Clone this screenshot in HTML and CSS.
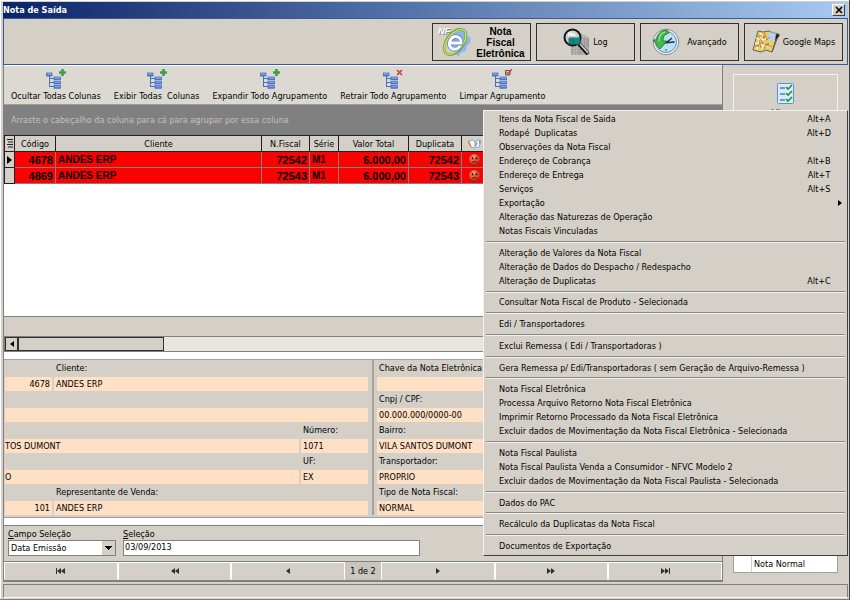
FILE: index.html
```html
<!DOCTYPE html>
<html lang="pt-BR">
<head>
  <meta charset="UTF-8">
  <meta name="viewport" content="width=device-width, initial-scale=1.0">
  <title>Nota de Saída</title>
  <link rel="stylesheet" href="styles.css">
</head>
<body>

  <!-- shared icon shapes -->
  <svg class="defs" aria-hidden="true">
    <defs>
      <linearGradient id="node" x1="0" y1="0" x2="0" y2="1">
        <stop offset="0" stop-color="#a9c6f7"/>
        <stop offset="1" stop-color="#3f6fd6"/>
      </linearGradient>
      <radialGradient id="face" cx=".4" cy=".3" r=".7">
        <stop offset="0" stop-color="#ff9a70"/>
        <stop offset="1" stop-color="#c81e08"/>
      </radialGradient>
      <symbol id="tree" viewBox="0 0 20 20">
        <path d="M3.500 6v12M3.500 9.500h5M3.500 13.500h5M3.500 17.500h5" fill="none" stroke="#4c6fb5"/>
        <g fill="url(#node)" stroke="#3560b8" stroke-width=".7">
          <rect x=".5" y="4" width="5.500" height="3"/>
          <rect x="8" y="8" width="6.500" height="2.800"/>
          <rect x="8" y="12.200" width="6.500" height="2.800"/>
          <rect x="8" y="16.400" width="6.500" height="2.800"/>
        </g>
      </symbol>
      <symbol id="sad" viewBox="0 0 14 14">
        <circle cx="7" cy="7" r="6.300" fill="url(#face)" stroke="#a51200" stroke-width=".6"/>
        <path d="M3.500 4l2 1M10.500 4l-2 1" stroke="#5a0c00" stroke-width=".8"/>
        <circle cx="5" cy="6" r="1" fill="#400"/>
        <circle cx="9" cy="6" r="1" fill="#400"/>
        <path d="M4 11q3-4 6 0" fill="none" stroke="#400"/>
      </symbol>
    </defs>
  </svg>

  <div class="window">
    <header class="title-bar">
      <h1>Nota de Saída</h1>
      <button type="button" class="close" aria-label="Fechar">
        <svg viewBox="0 0 8 8" width="8" height="8"><path d="M1 1l6 6M7 1L1 7" stroke="#000" stroke-width="1.600"/></svg>
      </button>
    </header>

    <div class="actions">
      <button type="button" class="action bold">
        <svg viewBox="0 0 34 32" width="34" height="32">
          <path d="M14 6l5-3 3 2 5-2 3 3-1 3 4 3-1 5-3 3-1 5-5 2-3 4-3-4-5-2-1-4 3-3z" fill="#8db5ea" stroke="#b4cdf2"/>
          <ellipse cx="17" cy="16" rx="8.500" ry="14.500" transform="rotate(36 17 16)" fill="none" stroke="#5faa3c" stroke-width="2.600"/>
          <ellipse cx="17" cy="16" rx="8" ry="14.500" transform="rotate(38 17 16)" fill="none" stroke="#dfe04a" stroke-width="1.200"/>
          <path d="M12 17h11c1-7-8-9-11-2-3 8 6 11 10 5" fill="none" stroke="#5d83c4" stroke-width="4.600"/>
          <path d="M12 17h11c1-7-8-9-11-2-3 8 6 11 10 5" fill="none" stroke="#fff" stroke-width="3"/>
          <text x="1" y="9" class="nf shade" aria-hidden="true">NF</text>
          <text x="0" y="8" class="nf">NF</text>
        </svg>
        <span>Nota<br>Fiscal<br>Eletrônica</span>
      </button>
      <button type="button" class="action">
        <svg viewBox="0 0 27 28" width="27" height="28">
          <path d="M8 5h9l9 5v17H8z" fill="#9b9b9b"/>
          <path d="M8 7h18M8 9h18M8 20h18M8 23h18M8 26h18M11 5v22M14 5v22M20 7v20M23 8v19" stroke="#c9c9c9" stroke-width=".6"/>
          <circle cx="9.500" cy="9.500" r="8" fill="#c6d2d2" fill-opacity=".8" stroke="#111" stroke-width="2"/>
          <path d="M5 4l6 1 3 3H5z" fill="#eee"/>
          <path d="M6 10h11v6H6zM6 12h11M6 14h11M10 10v6" fill="#19a49c" stroke="#075e5a" stroke-width=".7"/>
          <path d="M16 16l9 10" stroke="#111" stroke-width="4"/>
          <path d="M17 16l8 9" stroke="#dcdcdc" stroke-width="1.500"/>
        </svg>
        <span>Log</span>
      </button>
      <button type="button" class="action wide">
        <svg viewBox="0 0 28 28" width="28" height="28">
          <circle cx="14" cy="14" r="12.800" fill="#ececf0" stroke="#8d8d98" stroke-width="1"/>
          <circle cx="14" cy="14" r="10.500" fill="#b9e3f7" stroke="#5f8fb8" stroke-width="1"/>
          <path d="M14 5v2M14 21v2M5 14h2M21 14h2" stroke="#456"/>
          <path d="M14 15l6-5M12 15l10-1" stroke="#234" stroke-width="1.400"/>
          <path d="M15 2C8 2 5 7 5 12H1l7 9 7-8h-4c0-5 2-7 6-8z" fill="#45b84a" stroke="#16722a" stroke-width=".8"/>
          <path d="M13 4c-4 1-6 5-6 9" fill="none" stroke="#a8eba0" stroke-width="1.200"/>
        </svg>
        <span>Avançado</span>
      </button>
      <button type="button" class="action">
        <svg viewBox="0 0 28 24" width="28" height="24">
          <path d="M6 1l5 1 6-1 4 2 6 1-7 18-6-2-5 2-8-2z" fill="#f0ca62" stroke="#55585f" stroke-width=".9"/>
          <path d="M17 2l4 1 4 1-4 8-6-2z" fill="#b9d3e8"/>
          <path d="M4 8l8 2M3 13l16 4M9 3L5 19M14 8l-4 11" fill="none" stroke="#fff" stroke-width="1.200"/>
          <path d="M5 5l6 8 7-6M2 17l7-4 11 4M12 2l3 8M7 10l2 8M14 14l-2 5" fill="none" stroke="#a87428" stroke-width=".8"/>
          <path d="M7 6h2M11 7h2M5 16h2M15 14h2" stroke="#555" stroke-width="1.200"/>
          <path d="M24 4l4 1-5 6z" fill="#222"/>
          <path d="M24 9l-4 13" stroke="#555"/>
        </svg>
        <span>Google Maps</span>
      </button>
    </div>

    <div class="content">
      <main class="main">
        <div class="toolbar">
          <button type="button">
            <svg viewBox="0 0 20 20" width="20" height="20"><use href="#tree"/><path d="M16.500 0v7M13 3.500h7" stroke="#3f9c4f" stroke-width="2.600"/></svg>
            Ocultar Todas Colunas
          </button>
          <button type="button">
            <svg viewBox="0 0 20 20" width="20" height="20"><use href="#tree"/><path d="M16.500 0v7M13 3.500h7" stroke="#3f9c4f" stroke-width="2.600"/></svg>
            Exibir Todas&nbsp; Colunas
          </button>
          <button type="button">
            <svg viewBox="0 0 20 20" width="20" height="20"><use href="#tree"/><path d="M16.500 0v7M13 3.500h7" stroke="#3f9c4f" stroke-width="2.600"/></svg>
            Expandir Todo Agrupamento
          </button>
          <button type="button">
            <svg viewBox="0 0 20 20" width="20" height="20"><use href="#tree"/><path d="M14 1l5 5M19 1l-5 5" stroke="#d23a3a" stroke-width="1.600"/></svg>
            Retrair Todo Agrupamento
          </button>
          <button type="button">
            <svg viewBox="0 0 20 20" width="20" height="20"><use href="#tree"/><path d="M13.500 1.500h4.500v4.500h-4.500z" fill="#ccc" stroke="#555"/><path d="M14.500 3l1.500 2 4-5" fill="none" stroke="#d9362f" stroke-width="1.200"/></svg>
            Limpar Agrupamento
          </button>
        </div>

        <div class="group-area">Arraste o cabeçalho da coluna para cá para agrupar por essa coluna</div>

        <div class="grid-area">
          <table class="grid">
            <colgroup>
              <col class="c-mark"><col class="c-code"><col class="c-client"><col class="c-invoice"><col class="c-serie"><col class="c-total"><col class="c-dup"><col class="c-status"><col>
            </colgroup>
            <thead>
              <tr>
                <th><svg viewBox="0 0 6 9" width="6" height="9"><path d="M0 .5h6M1 3h5M0 5.500h6M1 8h5" stroke="#222"/></svg></th>
                <th>Código</th>
                <th>Cliente</th>
                <th>N.Fiscal</th>
                <th>Série</th>
                <th>Valor Total</th>
                <th>Duplicata</th>
                <th><svg viewBox="0 0 14 10" width="14" height="10"><path d="M1 2l4-1 2 2 3-2 3 1-2 6-4 1-4-1z" fill="#fff" stroke="#6a9ad0" stroke-width=".8"/><path d="M0 2l2 4 1 2" stroke="#f08030" stroke-width="1.500" fill="none"/><path d="M7 3v5M9 3l-1 4" stroke="#4a90d8"/><path d="M11 2h2l-2 4" fill="#ef7a38"/></svg></th>
                <th></th>
              </tr>
            </thead>
            <tbody>
              <tr class="current">
                <td><svg viewBox="0 0 5 8" width="5" height="8"><path d="M0 0l5 4-5 4z"/></svg></td>
                <td class="num">4678</td>
                <td>ANDES ERP</td>
                <td class="num">72542</td>
                <td>M1</td>
                <td class="num">6.000,00</td>
                <td class="num">72542</td>
                <td><svg width="13" height="13"><use href="#sad"/></svg></td>
                <td></td>
              </tr>
              <tr>
                <td></td>
                <td class="num">4869</td>
                <td>ANDES ERP</td>
                <td class="num">72543</td>
                <td>M1</td>
                <td class="num">6.000,00</td>
                <td class="num">72543</td>
                <td><svg width="13" height="13"><use href="#sad"/></svg></td>
                <td></td>
              </tr>
            </tbody>
          </table>
        </div>
        <div class="grid-footer"></div>
        <div class="scrollbar">
          <button type="button" aria-label="Rolar para a esquerda"><svg viewBox="0 0 4 6" width="4" height="6"><path d="M4 0v6L0 3z"/></svg></button>
          <div class="thumb"></div>
        </div>

        <div class="details">
          <div class="column">
            <div class="fields">
              <input class="code" aria-label="Código do cliente" value="4678" readonly>
              <div class="field"><label for="cliente">Cliente:</label><input id="cliente" value="ANDES ERP" readonly></div>
            </div>
            <div class="fields">
              <input aria-label="Complemento" value="" readonly>
            </div>
            <div class="fields">
              <input class="cut" aria-label="Endereço" value="TOS DUMONT" readonly>
              <div class="field small"><label for="numero">Número:</label><input id="numero" value="1071" readonly></div>
            </div>
            <div class="fields">
              <input class="cut" aria-label="Cidade" value="O" readonly>
              <div class="field small"><label for="uf">UF:</label><input id="uf" value="EX" readonly></div>
            </div>
            <div class="fields">
              <input class="code" aria-label="Código do representante" value="101" readonly>
              <div class="field"><label for="repr">Representante de Venda:</label><input id="repr" value="ANDES ERP" readonly></div>
            </div>
          </div>
          <div class="column right">
            <div class="fields"><div class="field"><label for="chave">Chave da Nota Eletrônica:</label><input id="chave" value="" readonly></div></div>
            <div class="fields"><div class="field"><label for="cnpj">Cnpj / CPF:</label><input id="cnpj" value="00.000.000/0000-00" readonly></div></div>
            <div class="fields"><div class="field"><label for="bairro">Bairro:</label><input id="bairro" value="VILA SANTOS DUMONT" readonly></div></div>
            <div class="fields"><div class="field"><label for="transp">Transportador:</label><input id="transp" value="PROPRIO" readonly></div></div>
            <div class="fields"><div class="field"><label for="tipo">Tipo de Nota Fiscal:</label><input id="tipo" value="NORMAL" readonly></div></div>
          </div>
        </div>

        <form class="filter">
          <div class="filter-field">
            <label for="campo"><u>C</u>ampo Seleção</label>
            <select id="campo"><option>Data Emissão</option></select>
          </div>
          <div class="filter-field text">
            <label for="selecao"><u>S</u>eleção</label>
            <input type="text" id="selecao" value="03/09/2013">
          </div>
        </form>

        <nav class="pager">
          <button type="button" aria-label="Primeiro"><svg viewBox="0 0 9 6" width="9" height="6"><path d="M0 0h1v6H0zM5 0v6L1 3zM9 0v6L5 3z"/></svg></button>
          <button type="button" aria-label="Página anterior"><svg viewBox="0 0 8 6" width="8" height="6"><path d="M4 0v6L0 3zM8 0v6L4 3z"/></svg></button>
          <button type="button" aria-label="Anterior"><svg viewBox="0 0 4 6" width="4" height="6"><path d="M4 0v6L0 3z"/></svg></button>
          <span>1 de 2</span>
          <button type="button" aria-label="Próximo"><svg viewBox="0 0 4 6" width="4" height="6"><path d="M0 0v6l4-3z"/></svg></button>
          <button type="button" aria-label="Próxima página"><svg viewBox="0 0 8 6" width="8" height="6"><path d="M0 0v6l4-3zM4 0v6l4-3z"/></svg></button>
          <button type="button" aria-label="Último"><svg viewBox="0 0 9 6" width="9" height="6"><path d="M0 0v6l4-3zM4 0v6l4-3zM8 0h1v6H8z"/></svg></button>
        </nav>
      </main>

      <aside class="side">
        <div class="side-box">
          <button type="button">
            <svg viewBox="0 0 17 21" width="17" height="21">
              <rect x=".5" y=".5" width="16" height="20" rx="1" fill="#d8eafb" stroke="#5b93d2"/>
              <path d="M3 5h5M3 11h5M3 17h5" stroke="#4a7fc0" stroke-width="1.300"/>
              <path d="M9 4l2 2 4-4M9 10l2 2 4-4M9 16l2 2 4-4" fill="none" stroke="#1f9436" stroke-width="1.600"/>
            </svg>
            Liberar
          </button>
        </div>
        <div class="legend"><span></span>Nota Normal</div>
      </aside>
    </div>

    <footer class="status"></footer>

    <div class="menu" role="menu">
      <button type="button" role="menuitem">Itens da Nota Fiscal de Saida <kbd>Alt+A</kbd></button>
      <button type="button" role="menuitem">Rodapé&nbsp; Duplicatas <kbd>Alt+D</kbd></button>
      <button type="button" role="menuitem">Observações da Nota Fiscal</button>
      <button type="button" role="menuitem">Endereço de Cobrança <kbd>Alt+B</kbd></button>
      <button type="button" role="menuitem">Endereço de Entrega <kbd>Alt+T</kbd></button>
      <button type="button" role="menuitem">Serviços <kbd>Alt+S</kbd></button>
      <button type="button" role="menuitem" class="submenu">Exportação <svg viewBox="0 0 4 6" width="4" height="6"><path d="M0 0l4 3-4 3z"/></svg></button>
      <button type="button" role="menuitem">Alteração das Naturezas de Operação</button>
      <button type="button" role="menuitem">Notas Fiscais Vinculadas</button>
      <div class="separator"></div>
      <button type="button" role="menuitem">Alteração de Valores da Nota Fiscal</button>
      <button type="button" role="menuitem">Alteração de Dados do Despacho / Redespacho</button>
      <button type="button" role="menuitem">Alteração de Duplicatas <kbd>Alt+C</kbd></button>
      <div class="separator"></div>
      <button type="button" role="menuitem">Consultar Nota Fiscal de Produto - Selecionada</button>
      <div class="separator"></div>
      <button type="button" role="menuitem">Edi / Transportadores</button>
      <div class="separator"></div>
      <button type="button" role="menuitem">Exclui Remessa ( Edi / Transportadoras )</button>
      <div class="separator"></div>
      <button type="button" role="menuitem">Gera Remessa p/ Edi/Transportadoras ( sem Geração de Arquivo-Remessa )</button>
      <div class="separator"></div>
      <button type="button" role="menuitem">Nota Fiscal Eletrônica</button>
      <button type="button" role="menuitem">Processa Arquivo Retorno Nota Fiscal Eletrônica</button>
      <button type="button" role="menuitem">Imprimir Retorno Processado da Nota Fiscal Eletrônica</button>
      <button type="button" role="menuitem">Excluir dados de Movimentação da Nota Fiscal Eletrônica - Selecionada</button>
      <div class="separator"></div>
      <button type="button" role="menuitem">Nota Fiscal Paulista</button>
      <button type="button" role="menuitem">Nota Fiscal Paulista Venda a Consumidor - NFVC Modelo 2</button>
      <button type="button" role="menuitem">Excluir dados de Movimentação da Nota Fiscal Paulista - Selecionada</button>
      <div class="separator"></div>
      <button type="button" role="menuitem">Dados do PAC</button>
      <div class="separator"></div>
      <button type="button" role="menuitem">Recálculo da Duplicatas da Nota Fiscal</button>
      <div class="separator"></div>
      <button type="button" role="menuitem">Documentos de Exportação</button>
    </div>
  </div>

</body>
</html>
```

FILE: styles.css
```css
* {
  box-sizing: border-box;
}
body {
  margin: 0;
  font-family: "DejaVu Sans Condensed", "DejaVu Sans", sans-serif;
  font-size: 9px;
  line-height: 12px;
  color: #000;
  background: #d4d0c8;
}
button, input, select {
  font: inherit;
  color: inherit;
  margin: 0;
  padding: 0;
  border: 0;
  border-radius: 0;
  background: none;
}
button {
  display: flex;
  align-items: center;
  justify-content: center;
}
svg {
  flex: none;
  display: block;
}
.defs {
  position: absolute;
  width: 0;
  height: 0;
}
.window {
  position: relative;
  display: flex;
  flex-direction: column;
  min-height: 100vh;
  padding: 2px 1px 1px 3px;
  border-right: 1px solid #404040;
  border-bottom: 1px solid #808080;
  background: #d4d0c8;
  box-shadow: inset 1px 1px #fff;
}

/* title bar */
.title-bar {
  display: flex;
  align-items: center;
  justify-content: space-between;
  height: 16px;
  padding-right: 3px;
  background: linear-gradient(to right, #0a246a, #a6caf0);
}
.title-bar h1 {
  margin: 0;
  font-size: 9px;
  font-weight: bold;
  color: #fff;
}
.close {
  width: 13px;
  height: 12px;
  background: #d4d0c8;
  border: 1px solid;
  border-color: #fff #404040 #404040 #fff;
}

/* header buttons */
.actions {
  display: flex;
  justify-content: flex-end;
  gap: 5px;
  padding: 4px 4px 3px;
  border: 1px solid #3b5998;
}
.action {
  width: 99px;
  height: 38px;
  gap: 3px;
  border: 1px solid #303030;
}
.action.bold {
  gap: 4px;
  font-family: "Liberation Sans", Arial, sans-serif;
  font-size: 10px;
  font-weight: bold;
  line-height: 11px;
}
.action.wide {
  gap: 7px;
}
.nf {
  font: italic bold 9px "Liberation Sans", sans-serif;
  fill: #fff;
}
.nf.shade {
  fill: #8a8a8a;
}

.content {
  flex: 1;
  display: flex;
}
.main {
  flex: 1;
  display: flex;
  flex-direction: column;
  min-width: 0;
  border-left: 1px solid #808080;
  border-right: 1px solid #808080;
}
.toolbar {
  display: flex;
  gap: 13px;
  height: 40px;
  padding: 4px 7px 3px;
  background: #dcd9d2;
  border-top: 1px solid #fff;
  border-bottom: 1px solid #a0a0a0;
}
.toolbar button {
  flex-direction: column;
  gap: 1px;
  white-space: nowrap;
}
.group-area {
  display: flex;
  align-items: center;
  height: 30px;
  padding-left: 7px;
  background: #808080;
  color: #c4c1ba;
}

/* invoice grid */
.grid-area {
  flex: 1;
  background: #fff;
  overflow: hidden;
}
.grid {
  width: 100%;
  table-layout: fixed;
  border-collapse: collapse;
}
.c-mark { width: 10px; }
.c-code { width: 41px; }
.c-client { width: 206px; }
.c-invoice { width: 48px; }
.c-serie { width: 29px; }
.c-total { width: 70px; }
.c-dup { width: 53px; }
.c-status { width: 26px; }
.grid th, .grid td {
  height: 16px;
  padding: 0 2px;
  border: 1px solid #202020;
  white-space: nowrap;
}
.grid th {
  background: #d4d0c8;
  font-weight: normal;
}
.grid td {
  background: #f00;
  border-color: #808080;
  font-family: "Liberation Sans", Arial, sans-serif;
  font-weight: bold;
  font-size: 10px;
}
.grid .current td {
  border-bottom-style: dashed;
}
.grid tbody td:first-child {
  background: #d4d0c8;
  border-color: #202020;
}
.grid td.num {
  font-size: 11px;
  text-align: right;
}
.grid svg {
  margin: 0 auto;
}
.grid-footer {
  height: 20px;
  border-top: 1px solid #808080;
  background: #d4d0c8;
}
.scrollbar {
  display: flex;
  height: 16px;
  border: 1px solid #808080;
  background: #e8e6e1;
}
.scrollbar button, .thumb {
  width: 13px;
  border: 1px solid #303030;
  background: #d4d0c8;
}
.thumb {
  width: 146px;
}

/* invoice details */
.details {
  display: grid;
  grid-template-columns: 363fr 354fr;
  padding: 1px 0 3px 1px;
  border-top: 7px solid #fff;
  border-bottom: 7px solid #fff;
  box-shadow: inset 0 1px #a0a0a0, inset 0 -1px #a0a0a0;
}
.fields {
  display: flex;
  align-items: flex-end;
  gap: 2px;
  height: 31px;
}
.fields > input, .field {
  flex: 1;
  min-width: 0;
}
.field {
  display: flex;
  flex-direction: column;
  gap: 3px;
}
.field label {
  padding-left: 2px;
}
.fields input {
  width: 100%;
  height: 14px;
  padding-left: 2px;
  background: #ffe0c4;
}
.fields .cut {
  padding-left: 0;
}
.fields .code {
  flex: 0 0 47px;
  padding-right: 2px;
  text-align: right;
}
.fields .small {
  flex: 0 0 67px;
}
.right {
  padding-left: 4px;
}
.right .fields {
  padding-left: 3px;
  border-left: 2px solid #a5a29c;
}

/* filter */
.filter {
  display: flex;
  gap: 7px;
  padding: 2px 4px 5px;
  border-top: 1px solid #808080;
}
.filter-field {
  display: flex;
  flex-direction: column;
  width: 108px;
}
.filter-field.text {
  width: 297px;
}
.filter-field input, .filter-field select {
  height: 16px;
  padding: 0 2px;
  border: 1px solid #808080;
  background-color: #fff;
}
.filter-field input {
  padding: 0 1px 2px;
}
.filter-field select {
  appearance: none;
  background-image: linear-gradient(#000, #000), linear-gradient(#000, #000), linear-gradient(#000, #000), linear-gradient(#000, #000), linear-gradient(#d4d0c8, #d4d0c8);
  background-repeat: no-repeat;
  background-size: 7px 1px, 5px 1px, 3px 1px, 1px 1px, 13px 14px;
  background-position: right 3px top 5px, right 4px top 6px, right 5px top 7px, right 6px top 8px, right top;
}

/* record navigation */
.pager {
  display: flex;
  height: 21px;
  border: 1px solid #808080;
  border-width: 1px 0 2px;
}
.pager button {
  flex: 1;
  border: 1px solid;
  border-color: #fff #fff #d4d0c8 #fff;
}
.pager span {
  padding: 3px 5px;
  background: #cac6be;
}
.pager svg {
  fill: #303030;
}

/* side column */
.side {
  display: flex;
  flex-direction: column;
  justify-content: space-between;
  width: 125px;
  padding: 9px 10px 9px;
}
.side-box {
  height: 80px;
  padding-top: 8px;
  border: 1px solid #f4f2ee;
}
.side-box button {
  flex-direction: column;
  width: 100%;
  gap: 3px;
}
.legend {
  display: flex;
  align-items: center;
  height: 18px;
  background: #fff;
  border: 1px solid #a0a0a0;
}
.legend span {
  align-self: stretch;
  width: 18px;
  margin-right: 2px;
  border-right: 1px solid #d4d0c8;
}
.status {
  height: 14px;
  margin-top: 2px;
  border: 1px solid #808080;
  border-bottom-color: #fff;
}

/* popup menu */
.menu {
  position: absolute;
  top: 110px;
  right: 1px;
  bottom: 43px;
  width: 365px;
  display: flex;
  flex-direction: column;
  padding: 1px 2px 2px;
  background: #d4d0c8;
  border: 1px solid;
  border-color: #f4f2ee #404040 #404040 #f4f2ee;
}
.menu button {
  justify-content: space-between;
  height: 14px;
  padding: 0 14px 0 13px;
  white-space: nowrap;
}
.menu kbd {
  width: 24px;
  font: inherit;
}
.menu .submenu {
  padding-right: 3px;
}
.separator {
  flex: 1;
  display: flex;
  flex-direction: column;
  justify-content: center;
}
.separator::before {
  content: "";
  border-top: 1px solid #8a8782;
  border-bottom: 1px solid #f4f2ee;
}
```
